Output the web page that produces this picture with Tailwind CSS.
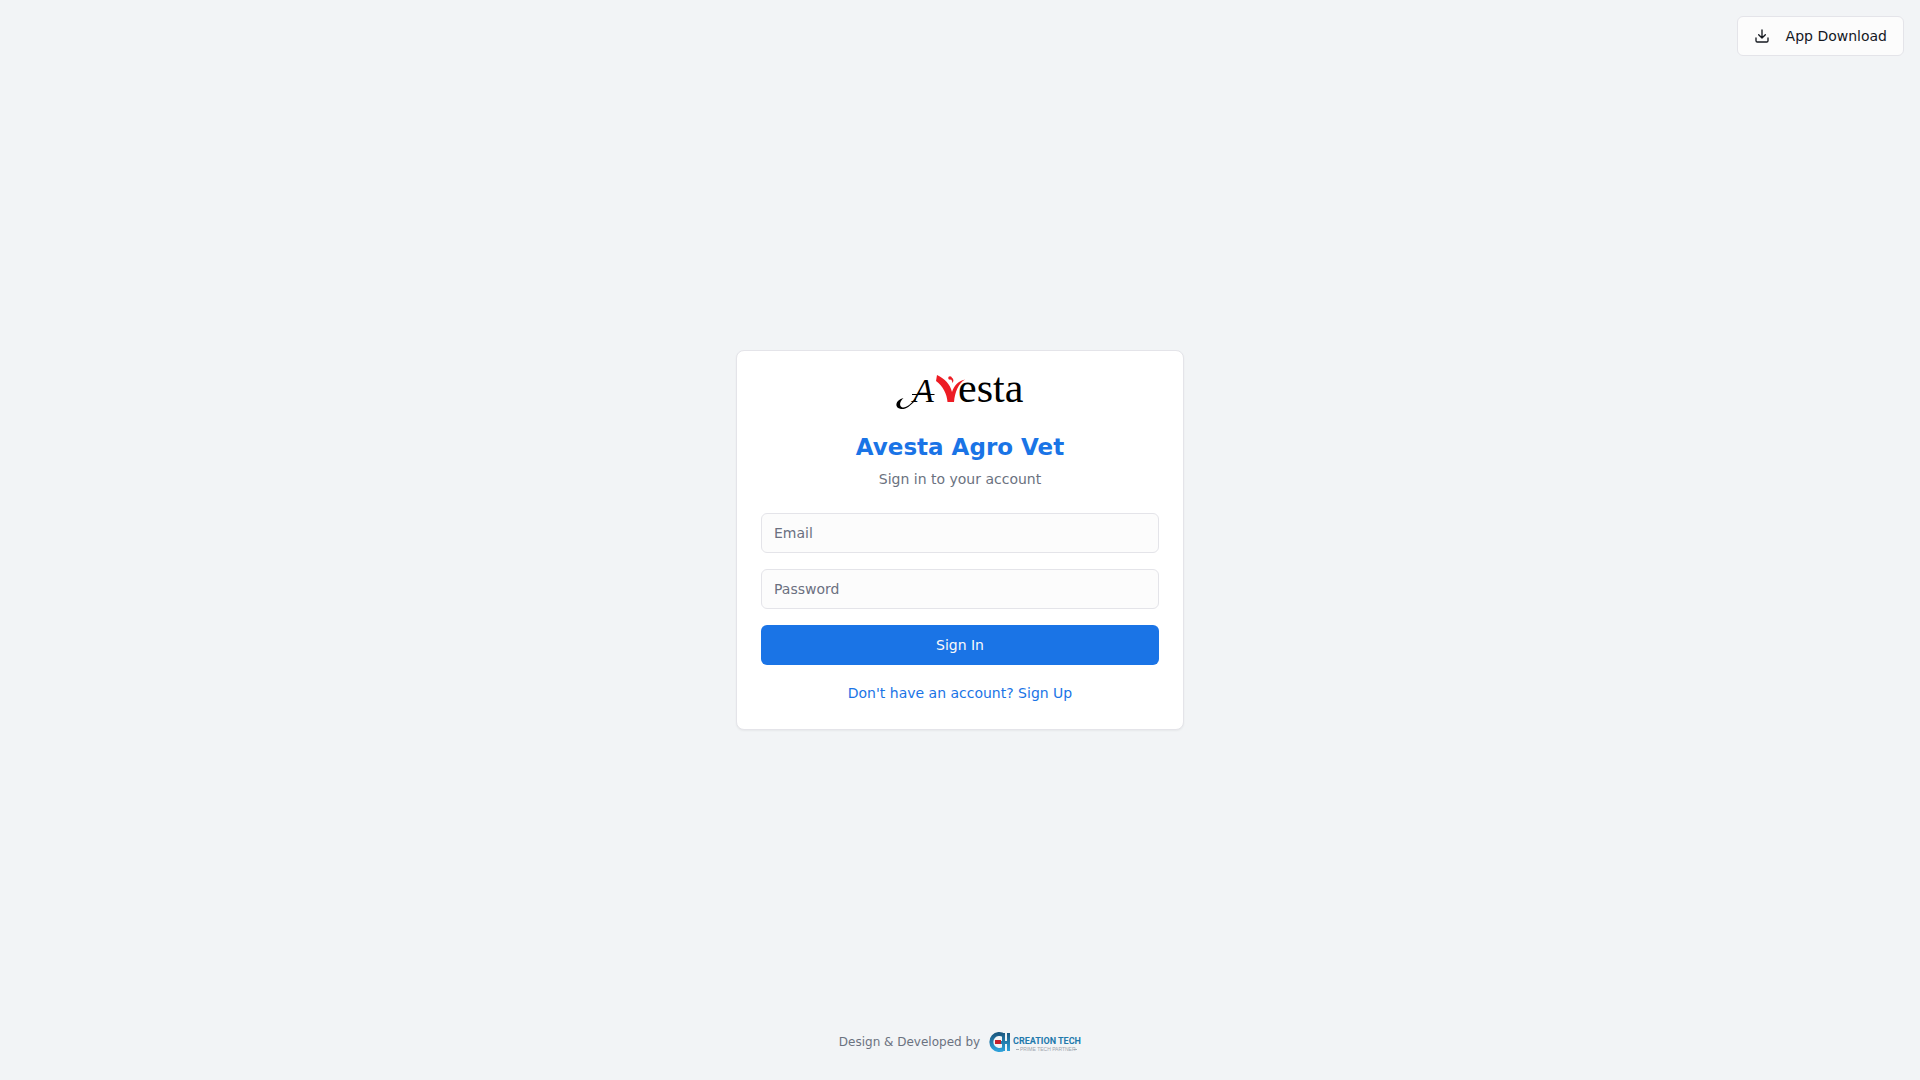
<!DOCTYPE html>
<html lang="en">
<head>
<meta charset="utf-8">
<meta name="viewport" content="width=device-width, initial-scale=1">
<title>Avesta Agro Vet</title>
<script src="https://cdn.jsdelivr.net/npm/@tailwindcss/browser@4"></script>
</head>
<body class="grid min-h-screen grid-rows-[76px_1fr_76px] bg-[#f2f4f6] font-['DejaVu_Sans',sans-serif] text-sm text-[#14181f]">
  <header class="flex items-start justify-end p-4">
    <button type="button" class="flex h-10 items-center gap-4 rounded-md border border-[#e4e4e9] bg-[#fcfcfc] px-4">
      <svg class="size-4" viewBox="0 0 24 24" fill="none" stroke="currentColor" stroke-width="2" stroke-linecap="round" stroke-linejoin="round" aria-hidden="true"><path d="M21 15v4a2 2 0 0 1-2 2H5a2 2 0 0 1-2-2v-4M7 10l5 5 5-5M12 15V3"/></svg>
      App Download
    </button>
  </header>

  <main class="flex items-center justify-center px-4">
    <section class="w-full max-w-md rounded-lg border border-[#e4e4e9] bg-white p-6 shadow-xs">
      <div class="flex flex-col items-center text-center">
        <svg class="h-9 w-32 overflow-visible" viewBox="0 0 128 36" fill="#000" role="img" aria-label="Avesta">
          <text x="17" y="27" font-family="Liberation Serif, serif" font-style="italic" font-size="34">A</text>
          <path d="M20 25C14 31 10 34.500 5 34C-2 33 -1 25 7.500 23C4 26 3 30 5.500 32C9 34 14 30 20 23Z"/>
          <path d="M16 19.500H38.500" stroke="#000"/>
          <g fill="#ed1c24">
            <path d="M41 0C49 4 54 9 56 17C58 11 62 6 69 4.500C62 9 59 17 58 27H51.500C51 19 47 11 40 6Z"/>
            <circle cx="54" cy="3" r="1.800"/>
            <path d="M54 2C58 3 58 6 56.500 8C56 5 55 4 53 3Z"/>
          </g>
          <text x="62" y="27" font-family="Liberation Serif, serif" font-size="42">esta</text>
        </svg>
        <h1 class="mt-5 text-[23px] leading-8 font-bold text-[#1a74e6]">Avesta Agro Vet</h1>
        <p class="mt-1.5 text-[#6b7280]">Sign in to your account</p>
      </div>
      <form class="mt-6 flex flex-col gap-4">
        <input type="email" aria-label="Email" placeholder="Email" class="h-10 rounded-md border border-[#e4e4e9] bg-[#fcfcfc] px-3 placeholder:text-[#6b7080]">
        <input type="password" aria-label="Password" placeholder="Password" class="h-10 rounded-md border border-[#e4e4e9] bg-[#fcfcfc] px-3 placeholder:text-[#6b7080]">
        <button type="submit" class="h-10 rounded-md bg-[#1a74e6] text-[#fafafa]">Sign In</button>
      </form>
      <p class="mt-[18px] mb-0.5 text-center"><a href="#" class="text-[#1a74e6]">Don't have an account? Sign Up</a></p>
    </section>
  </main>

  <footer class="flex items-center justify-center gap-2 text-xs text-[#6b7280]">
    <span>Design &amp; Developed by</span>
    <svg class="h-6 w-[93px] overflow-visible" viewBox="0 0 93 24" role="img" aria-label="Creation Tech, Prime Tech Partner">
      <defs>
        <linearGradient id="blue" x1="0" y1="0" x2="0" y2="1"><stop offset="0" stop-color="#1b5a82"/><stop offset="1" stop-color="#2d9fd8"/></linearGradient>
      </defs>
      <path d="M16 5.500A8 8 0 1 0 16 18.500" fill="none" stroke="url(#blue)" stroke-width="4"/>
      <path d="M14 3H17V11H19V3H22V21H19V14H17V21H14V14H7V11H14Z" fill="url(#blue)"/>
      <path d="M7 10H13V14H7Z" fill="#c4202b"/>
      <text x="25" y="14" font-family="Roboto, sans-serif" font-weight="700" font-size="9" fill="#2279ac">CREATION TECH</text>
      <path d="M28 19.500H31M86 19.500H89" stroke="#a9afb7"/>
      <text x="32" y="21" font-family="Liberation Sans, sans-serif" font-size="5" fill="#a0a6ae">PRIME TECH PARTNER</text>
    </svg>
  </footer>
</body>
</html>
